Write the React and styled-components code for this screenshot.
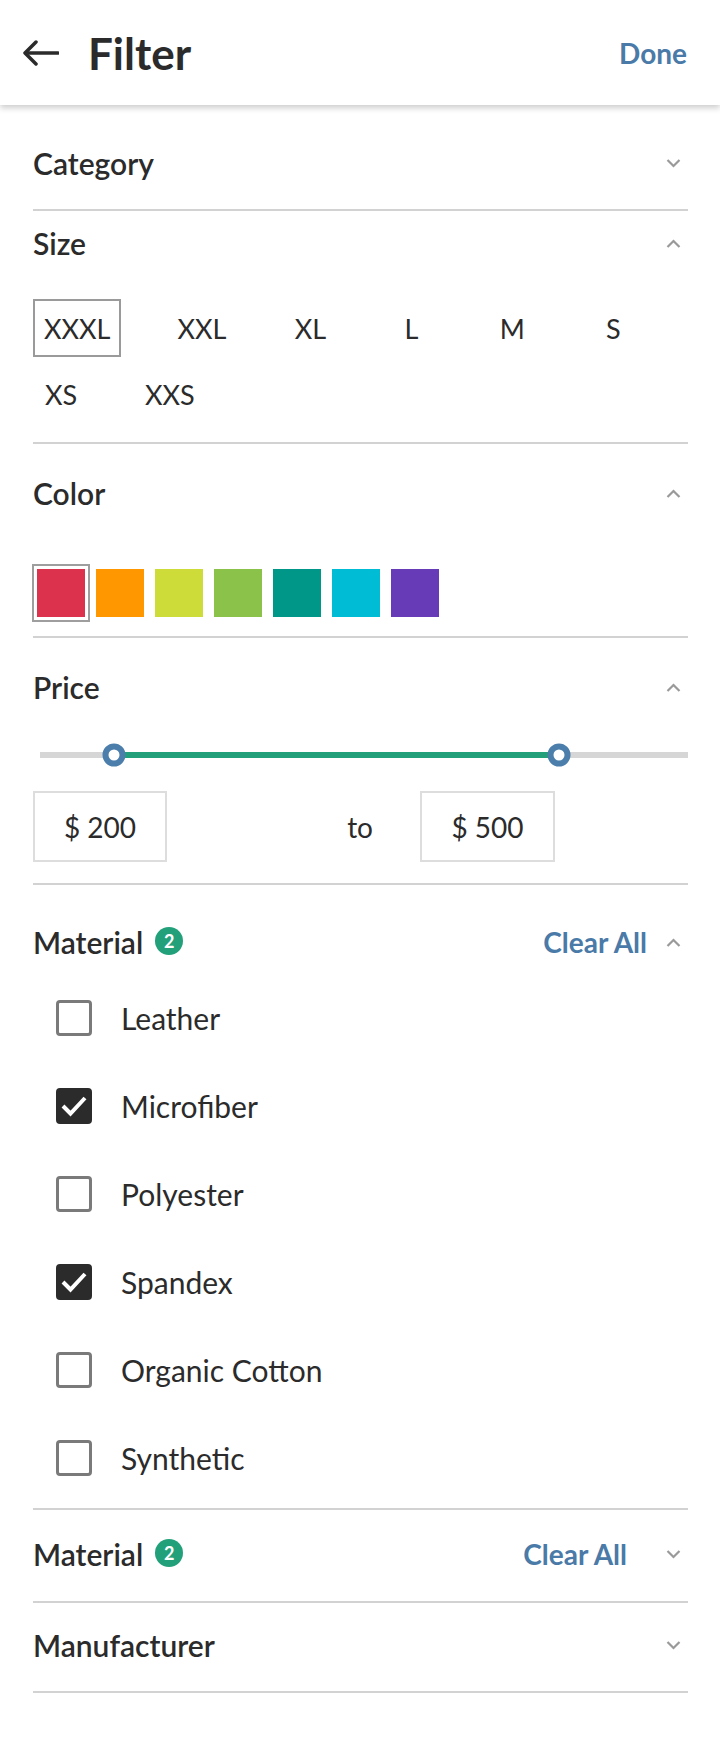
import React from "react";
import styled, { createGlobalStyle } from "styled-components";

const TEXT = "#2b2b2b";
const BLUE = "#4a7aa8";
const GREEN = "#22a07a";

const GlobalStyle = createGlobalStyle`
  body {
    margin: 0;
    background: #ffffff;
    font-family: Lato, "Open Sans", sans-serif;
    color: ${TEXT};
  }
`;

const Page = styled.div`
  width: 720px;
  min-height: 1738px;
  background: #ffffff;
`;

const Header = styled.header`
  height: 105px;
  display: flex;
  align-items: center;
  padding: 0 33px 0 23px;
  box-sizing: border-box;
  box-shadow: 0 3px 6px rgba(0, 0, 0, 0.2);
  position: relative;
  z-index: 1;
`;

const BackButton = styled.button`
  border: none;
  background: none;
  padding: 0;
  display: flex;
  cursor: pointer;
`;

const Title = styled.h1`
  margin: 0 0 0 29px;
  font-size: 44px;
  font-weight: 700;
  color: ${TEXT};
  flex: 1;
`;

const LinkButton = styled.button`
  border: none;
  background: none;
  padding: 0;
  font-family: inherit;
  font-size: 28px;
  font-weight: 700;
  color: ${BLUE};
  cursor: pointer;
`;

const List = styled.div`
  padding: 12px 32px 0 33px;
`;

const Section = styled.section`
  border-bottom: 2px solid #d2d2d2;
  padding-bottom: ${(p) => p.$bottom || 0}px;
`;

const SectionHeader = styled.div`
  display: flex;
  align-items: center;
  height: 64px;
  padding-top: ${(p) => p.$top}px;
  padding-bottom: ${(p) => p.$pad || 0}px;
`;

const SectionTitle = styled.h2`
  margin: 0;
  font-size: 30px;
  font-weight: 600;
  color: ${TEXT};
`;

const Badge = styled.span`
  width: 28px;
  height: 28px;
  border-radius: 50%;
  background: ${GREEN};
  color: #fff;
  font-size: 18px;
  font-weight: 700;
  display: inline-flex;
  align-items: center;
  justify-content: center;
  margin-left: 12px;
  margin-top: -2px;
`;

const HeaderRight = styled.div`
  margin-left: auto;
  display: flex;
  align-items: center;
  gap: ${(p) => p.$gap || 0}px;
  padding-right: 7px;
`;

const Chips = styled.div`
  display: flex;
  flex-wrap: wrap;
  column-gap: 45px;
  row-gap: 8px;
  margin-top: 24px;
`;

const Chip = styled.button`
  min-width: 56px;
  height: 58px;
  padding: 0 9px;
  box-sizing: border-box;
  border: 2px solid ${(p) => (p.$selected ? "#9a9a9a" : "transparent")};
  background: none;
  font-family: inherit;
  font-size: 27px;
  color: ${TEXT};
  display: flex;
  align-items: center;
  justify-content: center;
`;

const Swatches = styled.div`
  display: flex;
  gap: 1px;
  margin-top: 39px;
  margin-left: -1px;
`;

const Swatch = styled.button`
  width: 58px;
  height: 58px;
  padding: 3px;
  box-sizing: border-box;
  border: 2px solid ${(p) => (p.$selected ? "#9e9e9e" : "transparent")};
  background: none;
  display: flex;

  &::after {
    content: "";
    flex: 1;
    background: ${(p) => p.$color};
  }
`;

const Track = styled.div`
  position: relative;
  height: 6px;
  margin: 33px 0 0 7px;
  background: #d6d6d6;
`;

const TrackFill = styled.div`
  position: absolute;
  top: 0;
  bottom: 0;
  background: ${GREEN};
`;

const Thumb = styled.span`
  position: absolute;
  top: 50%;
  width: 23px;
  height: 23px;
  box-sizing: border-box;
  border-radius: 50%;
  border: 6px solid #4b7eab;
  background: #fff;
  transform: translate(-50%, -50%);
`;

const PriceRow = styled.div`
  display: grid;
  grid-template-columns: 134px 253px 135px;
  align-items: center;
  margin-top: 33px;
`;

const PriceBox = styled.div`
  height: 71px;
  box-sizing: border-box;
  border: 2px solid #dddddd;
  display: flex;
  align-items: center;
  justify-content: center;
  font-size: 28px;
`;

const ToLabel = styled.span`
  font-size: 28px;
  text-align: right;
  padding-right: 47px;
`;

const CheckList = styled.div`
  display: flex;
  flex-direction: column;
`;

const CheckRow = styled.label`
  height: 88px;
  display: flex;
  align-items: center;
  padding-left: 23px;
  font-size: 30px;
  cursor: pointer;
`;

const Box = styled.span`
  width: 36px;
  height: 36px;
  box-sizing: border-box;
  border-radius: 4px;
  border: 3px solid ${(p) => (p.$checked ? TEXT : "#7a7a7a")};
  background: ${(p) => (p.$checked ? TEXT : "#fff")};
  display: flex;
  align-items: center;
  justify-content: center;
  margin-right: 29px;
`;

const Chevron = ({ up }) => (
  <svg width="15" height="9" viewBox="0 0 15 9">
    <polyline
      points={up ? "1.5,8 7.5,2 13.5,8" : "1.5,1 7.5,7 13.5,1"}
      fill="none"
      stroke="#9a9a9a"
      strokeWidth="2.2"
    />
  </svg>
);

const BackArrow = () => (
  <svg width="36" height="26" viewBox="0 0 36 26">
    <polyline points="13,2 2,13 13,24" fill="none" stroke={TEXT} strokeWidth="3.5" strokeLinecap="round" strokeLinejoin="round" />
    <line x1="3" y1="13" x2="35" y2="13" stroke={TEXT} strokeWidth="3.5" strokeLinecap="round" />
  </svg>
);

const CheckMark = () => (
  <svg width="26" height="22" viewBox="0 0 26 22">
    <polyline points="2,11 9.5,18.5 24,3" fill="none" stroke="#fff" strokeWidth="4" />
  </svg>
);

const sizes = ["XXXL", "XXL", "XL", "L", "M", "S", "XS", "XXS"];
const colors = ["#dc324e", "#ff9800", "#cddc39", "#8bc34a", "#009688", "#00bcd4", "#673ab7"];
const materials = [
  { name: "Leather", checked: false },
  { name: "Microfiber", checked: true },
  { name: "Polyester", checked: false },
  { name: "Spandex", checked: true },
  { name: "Organic Cotton", checked: false },
  { name: "Synthetic", checked: false },
];

export default function App() {
  return (
    <Page>
      <GlobalStyle />
      <Header>
        <BackButton aria-label="Back">
          <BackArrow />
        </BackButton>
        <Title>Filter</Title>
        <LinkButton>Done</LinkButton>
      </Header>

      <List>
        <Section>
          <SectionHeader $top={14} $pad={14}>
            <SectionTitle>Category</SectionTitle>
            <HeaderRight>
              <Chevron />
            </HeaderRight>
          </SectionHeader>
        </Section>

        <Section $bottom={19}>
          <SectionHeader $top={0}>
            <SectionTitle>Size</SectionTitle>
            <HeaderRight>
              <Chevron up />
            </HeaderRight>
          </SectionHeader>
          <Chips>
            {sizes.map((s, i) => (
              <Chip key={s} $selected={i === 0}>
                {s}
              </Chip>
            ))}
          </Chips>
        </Section>

        <Section $bottom={14}>
          <SectionHeader $top={17}>
            <SectionTitle>Color</SectionTitle>
            <HeaderRight>
              <Chevron up />
            </HeaderRight>
          </SectionHeader>
          <Swatches>
            {colors.map((c, i) => (
              <Swatch key={c} $color={c} $selected={i === 0} aria-label={c} />
            ))}
          </Swatches>
        </Section>

        <Section $bottom={21}>
          <SectionHeader $top={17}>
            <SectionTitle>Price</SectionTitle>
            <HeaderRight>
              <Chevron up />
            </HeaderRight>
          </SectionHeader>
          <Track>
            <TrackFill style={{ left: 74, width: 445 }} />
            <Thumb style={{ left: 74 }} />
            <Thumb style={{ left: 519 }} />
          </Track>
          <PriceRow>
            <PriceBox>$ 200</PriceBox>
            <ToLabel>to</ToLabel>
            <PriceBox>$ 500</PriceBox>
          </PriceRow>
        </Section>

        <Section $bottom={6}>
          <SectionHeader $top={25}>
            <SectionTitle>Material</SectionTitle>
            <Badge>2</Badge>
            <HeaderRight $gap={19}>
              <LinkButton>Clear All</LinkButton>
              <Chevron up />
            </HeaderRight>
          </SectionHeader>
          <CheckList>
            {materials.map((m) => (
              <CheckRow key={m.name}>
                <Box $checked={m.checked}>{m.checked && <CheckMark />}</Box>
                {m.name}
              </CheckRow>
            ))}
          </CheckList>
        </Section>

        <Section>
          <SectionHeader $top={12} $pad={15}>
            <SectionTitle>Material</SectionTitle>
            <Badge>2</Badge>
            <HeaderRight $gap={39}>
              <LinkButton>Clear All</LinkButton>
              <Chevron />
            </HeaderRight>
          </SectionHeader>
        </Section>

        <Section>
          <SectionHeader $top={10} $pad={14}>
            <SectionTitle>Manufacturer</SectionTitle>
            <HeaderRight>
              <Chevron />
            </HeaderRight>
          </SectionHeader>
        </Section>
      </List>
    </Page>
  );
}
